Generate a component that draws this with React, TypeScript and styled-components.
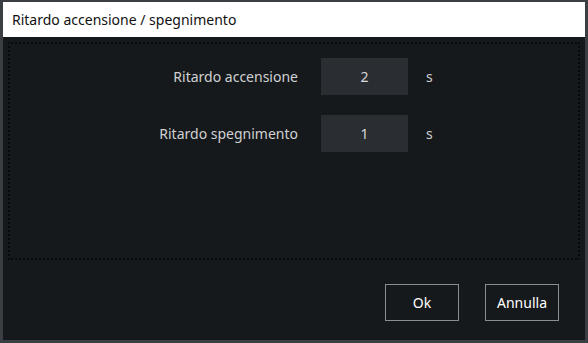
import styled, { createGlobalStyle } from "styled-components";

const GlobalStyle = createGlobalStyle`
  html, body {
    margin: 0;
    padding: 0;
    background: #3b3e42;
  }
  body {
    font-family: "Noto Sans", "Open Sans", Arial, sans-serif;
  }
`;

const Frame = styled.div`
  width: 588px;
  height: 343px;
  box-sizing: border-box;
  padding: 2px 3px 3px 3px;
  background: #3b3e42;
  display: flex;
  flex-direction: column;
`;

const TitleBar = styled.div`
  height: 35px;
  background: #ffffff;
  display: flex;
  align-items: center;
  padding-left: 9px;
  font-size: 14px;
  color: #111;
`;

const Body = styled.div`
  flex: 1;
  background: #16191c;
  display: flex;
  flex-direction: column;
  padding: 5px 5px 0 5px;
`;

const Panel = styled.div`
  height: 218px;
  box-sizing: border-box;
  border: 2px dotted #08090a;
  display: flex;
  flex-direction: column;
  padding-top: 14px;
  gap: 20px;
`;

const Row = styled.div`
  display: grid;
  grid-template-columns: 288px 87px 30px;
  column-gap: 23px;
  align-items: center;
`;

const Label = styled.div`
  text-align: right;
  color: #d0d1d2;
  font-size: 14px;
`;

const Field = styled.div`
  height: 37px;
  background: #2a2d31;
  color: #d8d9da;
  font-size: 14px;
  display: flex;
  align-items: center;
  justify-content: center;
`;

const Unit = styled.div`
  color: #d0d1d2;
  font-size: 14px;
  margin-left: -5px;
`;

const Footer = styled.div`
  display: flex;
  justify-content: flex-end;
  gap: 26px;
  padding: 24px 21px 0 0;
`;

const Button = styled.button`
  width: 74px;
  height: 37px;
  background: transparent;
  border: 1px solid #8b8e91;
  color: #ffffff;
  font-family: "Noto Sans", "Open Sans", Arial, sans-serif;
  font-size: 14px;
  padding: 0;
`;

const rows = [
  { label: "Ritardo accensione", value: "2" },
  { label: "Ritardo spegnimento", value: "1" },
];

export default function App() {
  return (
    <>
      <GlobalStyle />
      <Frame>
        <TitleBar>Ritardo accensione / spegnimento</TitleBar>
        <Body>
          <Panel>
            {rows.map((r) => (
              <Row key={r.label}>
                <Label>{r.label}</Label>
                <Field>{r.value}</Field>
                <Unit>s</Unit>
              </Row>
            ))}
          </Panel>
          <Footer>
            <Button>Ok</Button>
            <Button>Annulla</Button>
          </Footer>
        </Body>
      </Frame>
    </>
  );
}
